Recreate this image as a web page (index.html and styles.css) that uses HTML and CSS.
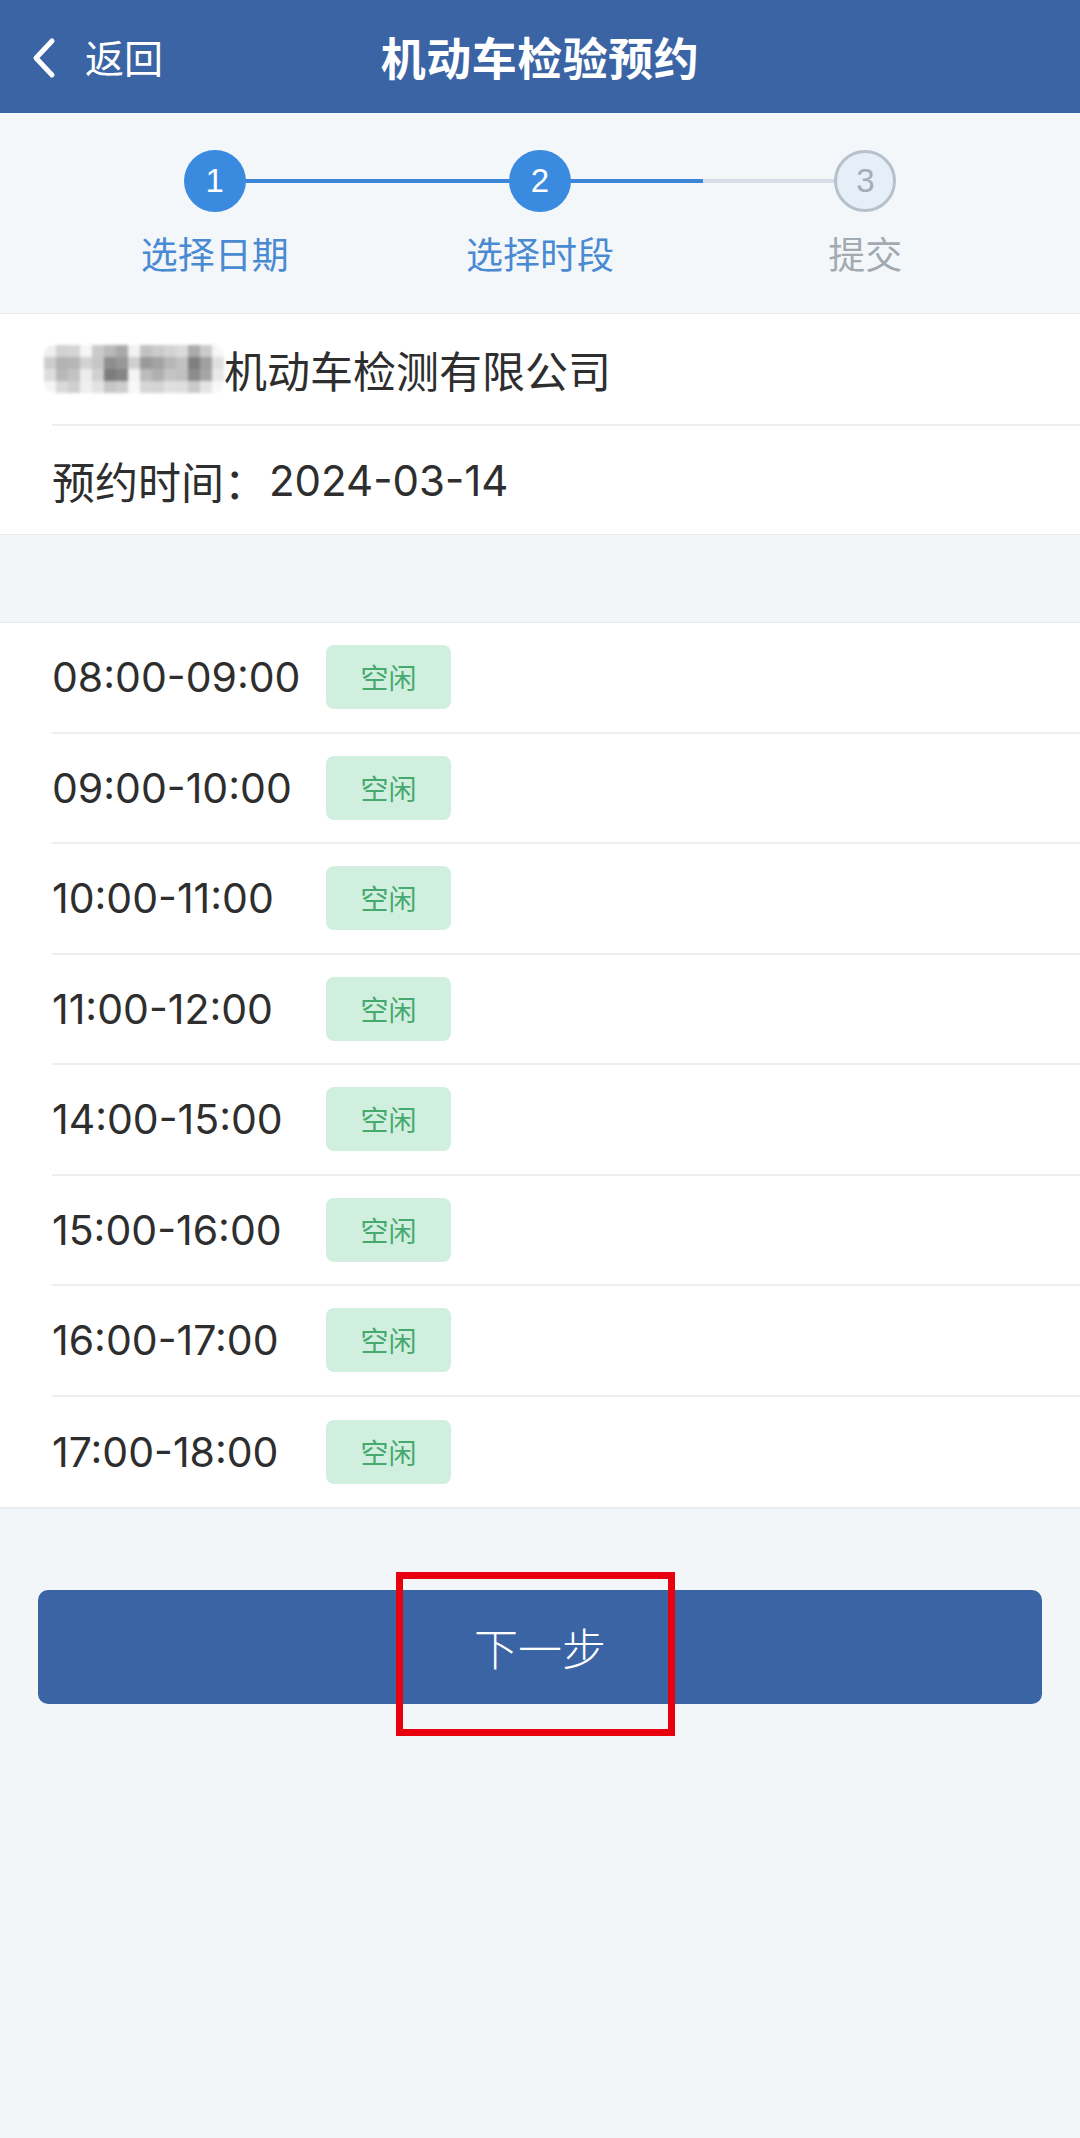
FILE: index.html
```html
<!DOCTYPE html>
<html lang="zh-CN">
<head>
<meta charset="utf-8">
<title>机动车检验预约</title>
<link rel="stylesheet" href="styles.css">
</head>
<body>
<header class="navbar">
  <div class="nav-back">
    <svg class="chevron" width="26" height="42" viewBox="0 0 26 42"><polyline points="21,4 5,21 21,38" fill="none" stroke="#fff" stroke-width="5" stroke-linecap="round" stroke-linejoin="round"/></svg>
    <span>返回</span>
  </div>
  <h1 class="nav-title">机动车检验预约</h1>
  <div></div>
</header>

<section class="steps">
  <div class="step step-done">
    <div class="step-circle">1</div>
    <div class="step-label">选择日期</div>
  </div>
  <div class="step step-active">
    <div class="step-circle">2</div>
    <div class="step-label">选择时段</div>
  </div>
  <div class="step step-todo">
    <div class="step-circle">3</div>
    <div class="step-label">提交</div>
  </div>
</section>

<section class="info">
  <div class="info-row company">
    <span class="mosaic">
      <i style="background:#efefef"></i><i style="background:#d2d2d2"></i><i style="background:#d4d4d4"></i><i style="background:#f5f5f5"></i><i style="background:#cacaca"></i><i style="background:#b9b9b9"></i><i style="background:#a9a9a9"></i><i style="background:#f2f2f2"></i><i style="background:#c2c2c2"></i><i style="background:#cbcbcb"></i><i style="background:#d3d3d3"></i><i style="background:#dadada"></i><i style="background:#aaaaaa"></i><i style="background:#cbcbcb"></i><i style="background:#f6f6f6"></i>
      <i style="background:#cdcdcd"></i><i style="background:#b3b3b3"></i><i style="background:#b6b6b6"></i><i style="background:#d3d3d3"></i><i style="background:#c6c6c6"></i><i style="background:#8e8e8e"></i><i style="background:#989898"></i><i style="background:#cfcfcf"></i><i style="background:#9a9a9a"></i><i style="background:#a2a2a2"></i><i style="background:#b6b6b6"></i><i style="background:#c2c2c2"></i><i style="background:#7f7f7f"></i><i style="background:#a0a0a0"></i><i style="background:#e0e0e0"></i>
      <i style="background:#dddddd"></i><i style="background:#b8b8b8"></i><i style="background:#c3c3c3"></i><i style="background:#ececec"></i><i style="background:#d0d0d0"></i><i style="background:#7c7c7c"></i><i style="background:#858585"></i><i style="background:#f4f4f4"></i><i style="background:#bcbcbc"></i><i style="background:#b0b0b0"></i><i style="background:#c4c4c4"></i><i style="background:#c0c0c0"></i><i style="background:#8c8c8c"></i><i style="background:#a6a6a6"></i><i style="background:#e8e8e8"></i>
      <i style="background:#f4f4f4"></i><i style="background:#d9d9d9"></i><i style="background:#cfcfcf"></i><i style="background:#f0f0f0"></i><i style="background:#e2e2e2"></i><i style="background:#c6c6c6"></i><i style="background:#cdcdcd"></i><i style="background:#f8f8f8"></i><i style="background:#d6d6d6"></i><i style="background:#d4d4d4"></i><i style="background:#e0e0e0"></i><i style="background:#dedede"></i><i style="background:#cacaca"></i><i style="background:#e4e4e4"></i><i style="background:#f8f8f8"></i>
    </span><span class="company-name">机动车检测有限公司</span>
  </div>
  <div class="info-row">预约时间：<span class="num">2024-03-14</span></div>
</section>

<div class="spacer"></div>

<section class="slots">
  <div class="slot"><span class="slot-time">08:00-09:00</span><span class="badge">空闲</span></div>
  <div class="slot"><span class="slot-time">09:00-10:00</span><span class="badge">空闲</span></div>
  <div class="slot"><span class="slot-time">10:00-11:00</span><span class="badge">空闲</span></div>
  <div class="slot"><span class="slot-time">11:00-12:00</span><span class="badge">空闲</span></div>
  <div class="slot"><span class="slot-time">14:00-15:00</span><span class="badge">空闲</span></div>
  <div class="slot"><span class="slot-time">15:00-16:00</span><span class="badge">空闲</span></div>
  <div class="slot"><span class="slot-time">16:00-17:00</span><span class="badge">空闲</span></div>
  <div class="slot"><span class="slot-time">17:00-18:00</span><span class="badge">空闲</span></div>
</section>

<div class="actions">
  <button class="next-btn">下一步</button>
  <div class="highlight"></div>
</div>
</body>
</html>
```

FILE: styles.css
```css
html, body {
  margin: 0;
  padding: 0;
}
body {
  width: 1080px;
  min-height: 2138px;
  background: #f3f6f8;
  font-family: Inter, "Noto Sans CJK SC", sans-serif;
  color: #2e2e2e;
}

/* nav bar */
.navbar {
  height: 113px;
  background: #3b64a5;
  display: grid;
  grid-template-columns: 1fr auto 1fr;
  align-items: center;
  color: #fff;
}
.nav-back {
  display: flex;
  align-items: center;
  padding-left: 31px;
  gap: 28px;
  font-family: "Noto Sans CJK SC", sans-serif;
  font-size: 39px;
  line-height: 1;
}
.chevron {
  display: block;
  margin-top: 2px;
}
.nav-title {
  margin: 0;
  font-family: "Noto Sans CJK SC", sans-serif;
  font-size: 45px;
  font-weight: 700;
  line-height: 1;
  letter-spacing: 0.5px;
}

/* steps */
.steps {
  display: grid;
  grid-template-columns: repeat(3, 1fr);
  padding: 37px 52px 0;
  height: 201px;
  box-sizing: border-box;
  border-bottom: 1px solid #e7eaed;
  background: #f4f7f9;
}
.step {
  position: relative;
  display: flex;
  flex-direction: column;
  align-items: center;
}
.step::before,
.step::after {
  content: "";
  position: absolute;
  top: 29px;
  height: 4px;
  width: 50%;
}
.step::before { left: 0; }
.step::after { right: 0; }
.step-done::before { display: none; }
.step-done::after { background: #3b86d6; }
.step-active::before { background: #3b86d6; }
.step-active::after { background: #3b86d6; }
.step-todo::before { background: #d6dfe8; }
.step-todo::after { display: none; }

.step-circle {
  position: relative;
  z-index: 1;
  width: 62px;
  height: 62px;
  box-sizing: border-box;
  border-radius: 50%;
  display: flex;
  align-items: center;
  justify-content: center;
  font-family: "Liberation Sans", Arial, sans-serif;
  font-size: 33px;
  background: #3a8ae0;
  color: #fff;
}
.step-todo .step-circle {
  background: #e6eef8;
  border: 3px solid #b7c1cc;
  color: #a3adb8;
}
.step-label {
  margin-top: 20px;
  font-family: "Noto Sans CJK SC", sans-serif;
  font-size: 37px;
  line-height: 42px;
  color: #4a8ad3;
}
.step-todo .step-label {
  color: #a2a9b1;
}

/* info card */
.info {
  background: #fff;
  padding-left: 52px;
  border-bottom: 1px solid #e9ecef;
}
.info-row {
  height: 110px;
  display: flex;
  align-items: center;
  font-size: 43px;
  font-family: "Noto Sans CJK SC", sans-serif;
  color: #2e2e2e;
}
.info-row + .info-row {
  border-top: 2px solid #eeeeee;
  height: 108px;
}
.info-row .num {
  font-family: Inter, sans-serif;
  font-size: 42px;
  margin-left: 2px;
}
.mosaic {
  display: grid;
  grid-template-columns: repeat(15, 12px);
  grid-auto-rows: 12px;
  width: 180px;
  height: 48px;
  border-radius: 10px;
  overflow: hidden;
  filter: blur(1.5px);
  margin-left: -8px;
}
.mosaic i {
  display: block;
}

.spacer {
  height: 87px;
  border-bottom: 1px solid #e6e9ec;
}

/* slots */
.slots {
  background: #fff;
  border-bottom: 2px solid #e9ecef;
}
.slot {
  margin-left: 52px;
  height: 110.5px;
  box-sizing: border-box;
  display: flex;
  align-items: center;
  border-bottom: 2px solid #eeeeee;
}
.slot:last-child {
  border-bottom: none;
}
.slot-time {
  width: 274px;
  font-family: Inter, sans-serif;
  font-size: 41px;
  color: #2e2e2e;
}
.badge {
  width: 125px;
  height: 64px;
  border-radius: 8px;
  background: #d1efdf;
  color: #46a96d;
  font-family: "Noto Sans CJK SC", sans-serif;
  font-size: 28px;
  display: flex;
  align-items: center;
  justify-content: center;
}

/* actions */
.actions {
  position: relative;
  margin: 81px 38px 0;
}
.next-btn {
  display: block;
  width: 100%;
  height: 114px;
  border: none;
  border-radius: 10px;
  background: #3b64a5;
  color: #fff;
  font-family: "Noto Sans CJK SC", sans-serif;
  font-size: 44px;
  font-weight: 300;
  padding: 0;
}
.highlight {
  position: absolute;
  left: 358px;
  top: -18px;
  width: 279px;
  height: 164px;
  box-sizing: border-box;
  border: 7px solid #e8000f;
}
```
